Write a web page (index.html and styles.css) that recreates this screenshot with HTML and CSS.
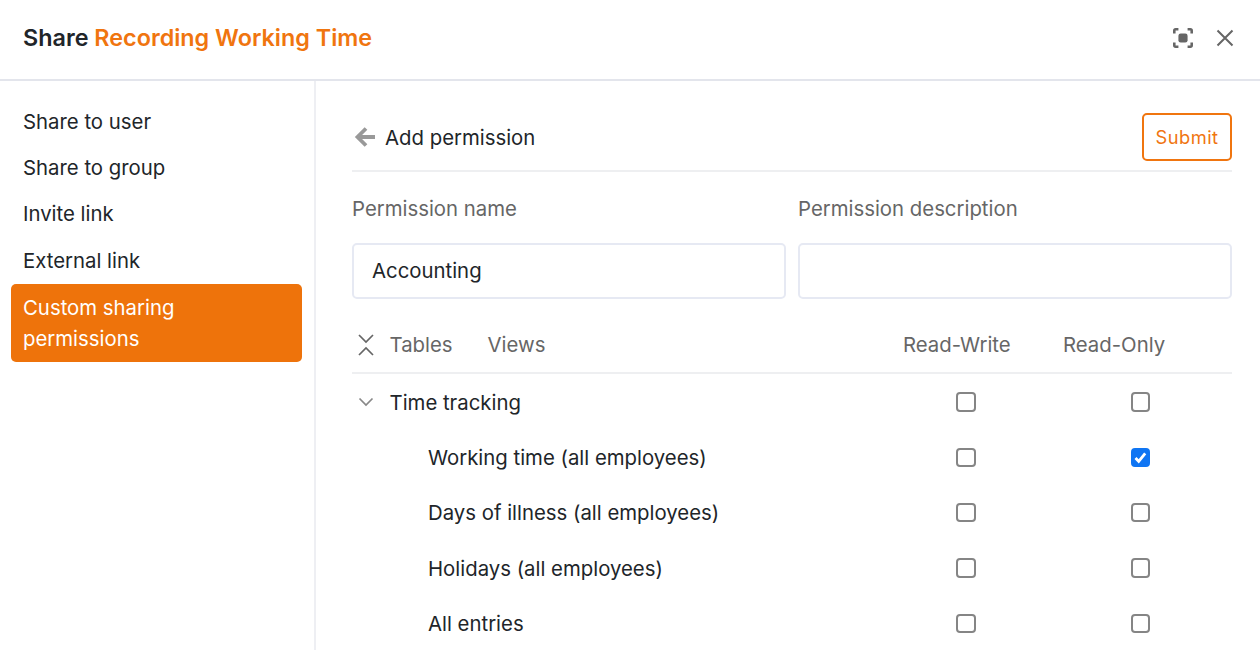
FILE: index.html
```html
<!DOCTYPE html>
<html lang="en">
<head>
  <meta charset="UTF-8">
  <title>Share Recording Working Time</title>
  <link rel="stylesheet" href="styles.css">
</head>
<body>
  <header class="top">
    <h1>Share <span class="accent">Recording Working Time</span></h1>
    <div class="top-icons">
      <svg width="22" height="22" viewBox="0 0 24 24" fill="none" stroke="#666" stroke-width="2.800">
        <path d="M2.500 7V4a1.500 1.500 0 0 1 1.500-1.500h3M17 2.500h3A1.500 1.500 0 0 1 21.500 4v3M21.500 17v3a1.500 1.500 0 0 1-1.500 1.500h-3M7 21.500H4A1.500 1.500 0 0 1 2.500 20v-3"/>
        <rect x="7" y="7" width="10" height="10" rx="2.500" fill="#666" stroke="none"/>
      </svg>
      <svg width="20" height="20" viewBox="0 0 20 20" fill="none" stroke="#666" stroke-width="2">
        <path d="M2.500 2.500l15 15M17.500 2.500l-15 15"/>
      </svg>
    </div>
  </header>

  <div class="body">
    <nav class="side">
      <a>Share to user</a>
      <a>Share to group</a>
      <a>Invite link</a>
      <a>External link</a>
      <a class="active">Custom sharing permissions</a>
    </nav>

    <main class="content">
      <div class="head">
        <div class="back">
          <svg width="22" height="22" viewBox="0 0 22 22" fill="none" stroke="#999" stroke-width="3.800">
            <path d="M21 11H4M12 2.500L3.500 11l8.500 8.500"/>
          </svg>
          <span>Add permission</span>
        </div>
        <button class="submit">Submit</button>
      </div>

      <div class="fields">
        <div class="field">
          <label>Permission name</label>
          <input type="text" value="Accounting">
        </div>
        <div class="field">
          <label>Permission description</label>
          <input type="text">
        </div>
      </div>

      <div class="row row-head">
        <div class="name">
          <svg class="twist" width="18" height="24" viewBox="0 0 18 24" fill="none" stroke="#666" stroke-width="1.700">
            <path d="M2 2l7 7 7-7M2 22l7-7 7 7"/>
          </svg>
          <span>Tables</span>
          <span class="views">Views</span>
        </div>
        <div class="col-rw">Read-Write</div>
        <div class="col-ro">Read-Only</div>
      </div>

      <div class="row">
        <div class="name">
          <svg class="twist" width="18" height="10" viewBox="0 0 18 10" fill="none" stroke="#888" stroke-width="1.700">
            <path d="M2.500 1.500l6.500 6.500 6.500-6.500"/>
          </svg>
          <span>Time tracking</span>
        </div>
        <div class="col-rw"><span class="box"></span></div>
        <div class="col-ro"><span class="box"></span></div>
      </div>
      <div class="row">
        <div class="name sub">Working time (all employees)</div>
        <div class="col-rw"><span class="box"></span></div>
        <div class="col-ro">
          <span class="box checked">
            <svg width="15" height="15" viewBox="0 0 15 15" fill="none" stroke="#fff" stroke-width="2.800"><path d="M2.500 8l3.200 3.300 6.500-8"/></svg>
          </span>
        </div>
      </div>
      <div class="row">
        <div class="name sub">Days of illness (all employees)</div>
        <div class="col-rw"><span class="box"></span></div>
        <div class="col-ro"><span class="box"></span></div>
      </div>
      <div class="row">
        <div class="name sub">Holidays (all employees)</div>
        <div class="col-rw"><span class="box"></span></div>
        <div class="col-ro"><span class="box"></span></div>
      </div>
      <div class="row">
        <div class="name sub">All entries</div>
        <div class="col-rw"><span class="box"></span></div>
        <div class="col-ro"><span class="box"></span></div>
      </div>
    </main>
  </div>
</body>
</html>
```

FILE: styles.css
```css
* { box-sizing: border-box; }
html, body { height: 100%; }
body { margin: 0; height: 650px; overflow: hidden; background: #fff; color: #212529; font-family: Inter, "Noto Sans", sans-serif; font-size: 20.350px; }

.top { height: 81px; padding: 0 25px 4px 23px; display: flex; align-items: center; justify-content: space-between; border-bottom: 2px solid #e3e5ec; }
.top h1 { margin: 0; font-size: 23.350px; font-weight: 600; }
.accent { color: #f0750f; }
.top-icons { display: flex; align-items: center; gap: 21px; }

.body { display: flex; height: 569px; }
.side { width: 316px; flex: none; padding: 17.500px 12px 0 11px; border-right: 2px solid #eeeff3; display: flex; flex-direction: column; }
.side a { display: block; padding: 8px 12px; line-height: 30.400px; }
.side a.active { padding: 8px 12px; line-height: 31px; background: #ee730b; color: #fff; border-radius: 5px; }

.content { flex: 1; padding: 0 28px 0 36px; overflow: hidden; }
.head { height: 91px; padding-top: 23px; display: flex; align-items: center; justify-content: space-between; border-bottom: 2px solid #eeeff1; }
.back { display: flex; align-items: center; gap: 9px; padding-left: 2px; }
.submit { width: 90px; height: 48px; padding: 0; background: #fff; border: 2px solid #f0750f; border-radius: 5px; color: #f0750f; font-family: inherit; font-size: 18.300px; letter-spacing: 0.500px; }

.fields { display: flex; gap: 12px; }
.field { flex: 1; }
.field label { display: block; height: 70.500px; padding-top: 22px; color: #666; line-height: 30px; }
.field input { display: block; width: 100%; height: 56px; padding: 0 18px; border: 2px solid #e6e9f3; border-radius: 5px; color: #212529; font-family: inherit; font-size: 20.350px; }

.row { display: grid; grid-template-columns: 551px 160px 1fr; height: 55.300px; align-items: center; }
.row-head { height: 75.500px; padding-top: 19px; margin-bottom: 0.500px; color: #666; border-bottom: 2px solid #eeeff1; }
.name { display: flex; align-items: center; }
.twist { width: 18px; margin: 0 14.500px 0 5px; flex: none; }
.views { margin-left: 35px; }
.sub { padding-left: 76px; }
.col-rw .box { margin-left: 53px; }
.col-ro .box { margin-left: 67.500px; }
.box { display: flex; align-items: center; justify-content: center; width: 19.500px; height: 19.500px; border: 2px solid #858585; border-radius: 4px; }
.box.checked { background: #0f75f3; border-color: #0f75f3; }
```
